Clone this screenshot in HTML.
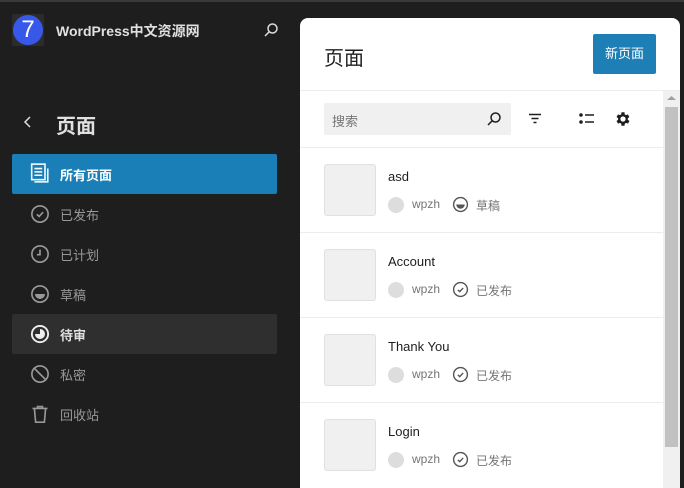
<!DOCTYPE html>
<html><head><meta charset="utf-8"><style>
*{margin:0;padding:0;box-sizing:border-box}
body{width:684px;height:482px;overflow:hidden;background:#1e1e1e;font-family:"Liberation Sans","Noto Sans CJK SC",sans-serif;position:relative}
.topline{position:absolute;left:0;top:0;width:684px;height:2px;background:#3a3a3a}
.logo{position:absolute;left:12px;top:14px;width:32px;height:32px;background:#2c2c2c;border-radius:2px}
.logo div{position:absolute;left:1px;top:1px;width:30px;height:30px;border-radius:50%;background:#3858e9;color:#fff;font-size:24px;text-align:center;line-height:30px}
.site{position:absolute;left:56px;top:21px;color:#e0e0e0;font-size:14px;font-weight:bold}
.abs{position:absolute}
.h{position:absolute;left:56px;top:110px;color:#e0e0e0;font-size:20px;font-weight:bold}
.item{position:absolute;left:12px;width:265px;height:40px;color:#999;font-size:13px;border-radius:2px}
.item span{position:absolute;left:48px;top:11px}
.item svg{position:absolute;left:18px;top:10px}
.panel{position:absolute;left:300px;top:18px;width:380px;height:470px;background:#fff;border-radius:8px 8px 0 0;overflow:hidden}
.ph{position:absolute;left:24px;top:24px;font-size:20px;color:#1e1e1e}
.btn{position:absolute;left:293px;top:16px;width:63px;height:40px;background:#1e7fb6;color:#fff;font-size:13px;text-align:center;line-height:40px;border-radius:2px}
.sep{position:absolute;left:0;width:363px;height:1px;background:#ececec}
.search{position:absolute;left:24px;top:85px;width:187px;height:32px;background:#f0f0f0;border-radius:2px;font-size:13px;color:#757575;padding:8px 8px}
.row{position:absolute;left:0;width:363px;height:85px}
.thumb{position:absolute;left:24px;top:17px;width:52px;height:52px;background:#f0f0f0;border:1px solid #e0e0e0;border-radius:3px}
.t{position:absolute;left:88px;top:22px;font-size:13px;color:#1e1e1e}
.m{position:absolute;left:88px;top:49px;font-size:12px;color:#757575;height:18px;width:200px}
.av{position:absolute;left:0;top:1px;width:16px;height:16px;border-radius:50%;background:#ddd}
.scroll{position:absolute;left:363px;top:73px;width:17px;height:400px;background:#f0f0f0}
.thumbbar{position:absolute;left:2px;top:16px;width:13px;height:340px;background:#c1c1c1}
</style></head><body>
<div class="topline"></div>
<div class="logo"><div>7</div></div>
<div class="site">WordPress中文资源网</div>
<svg class="abs" style="left:263px;top:22px" width="16" height="16" viewBox="0 0 16 16"><circle cx="9.5" cy="6.5" r="4.5" fill="none" stroke="#ddd" stroke-width="1.5"/><path d="M6.3 9.7L2 14" stroke="#ddd" stroke-width="1.5"/></svg>
<svg class="abs" style="left:22px;top:115px" width="12" height="14" viewBox="0 0 12 14"><path d="M8 2L3 7l5 5" fill="none" stroke="#ddd" stroke-width="1.5"/></svg>
<div class="h">页面</div>
<div class="item" style="top:154px;background:#1a7fb6;color:#fff"><svg width="20" height="20" viewBox="0 0 18 18" style="left:18px;top:9px"><rect x="1.5" y="1" width="12" height="14" fill="none" stroke="#fff" stroke-width="1.4"/><path d="M4 5h7M4 8h7M4 11h7M16 5v12H4" fill="none" stroke="#fff" stroke-width="1.4"/></svg><span style="font-weight:bold">所有页面</span></div>
<div class="item" style="top:194px"><svg width="20" height="20" viewBox="0 0 16 16"><circle cx="8" cy="8" r="6.5" fill="none" stroke="#999" stroke-width="1.3"/><path d="M5.5 8.3l1.8 1.7 3.2-3.5" fill="none" stroke="#999" stroke-width="1.3"/></svg><span>已发布</span></div>
<div class="item" style="top:234px"><svg width="20" height="20" viewBox="0 0 16 16"><circle cx="8" cy="8" r="6.5" fill="none" stroke="#999" stroke-width="1.3"/><path d="M8 4.5V8.5H5.5" fill="none" stroke="#999" stroke-width="1.3"/></svg><span>已计划</span></div>
<div class="item" style="top:274px"><svg width="20" height="20" viewBox="0 0 16 16"><circle cx="8" cy="8" r="6.5" fill="none" stroke="#999" stroke-width="1.3"/><path d="M4 8h8a4 4 0 0 1-8 0z" fill="#999"/></svg><span>草稿</span></div>
<div class="item" style="top:314px;background:#2f2f2f;color:#e0e0e0"><svg width="20" height="20" viewBox="0 0 16 16"><circle cx="8" cy="8" r="6.5" fill="none" stroke="#eee" stroke-width="1.5"/><path d="M8 4a4 4 0 1 1-4 4h4z" fill="#eee"/></svg><span style="font-weight:bold">待审</span></div>
<div class="item" style="top:354px"><svg width="20" height="20" viewBox="0 0 16 16"><circle cx="8" cy="8" r="6.5" fill="none" stroke="#999" stroke-width="1.3"/><path d="M3.5 3.5l9 9" stroke="#999" stroke-width="1.3"/></svg><span>私密</span></div>
<div class="item" style="top:394px"><svg width="20" height="20" viewBox="0 0 16 16"><path d="M2 3.5h12M6 3.5V2h4v1.5M3.5 3.5l1 11h7l1-11" fill="none" stroke="#999" stroke-width="1.3"/></svg><span>回收站</span></div>

<div class="panel">
<div class="ph">页面</div>
<div class="btn">新页面</div>
<div class="sep" style="top:72px;width:380px"></div>
<div class="search">搜索</div>
<svg class="abs" style="left:186px;top:93px" width="16" height="16" viewBox="0 0 16 16"><circle cx="9.5" cy="6.5" r="4.5" fill="none" stroke="#1e1e1e" stroke-width="1.5"/><path d="M6.3 9.7L2 14" stroke="#1e1e1e" stroke-width="1.5"/></svg>
<svg class="abs" style="left:228px;top:94px" width="14" height="14" viewBox="0 0 14 14"><path d="M1 2.5h12M3.5 6.5h7M5.5 10.5h3" stroke="#1e1e1e" stroke-width="1.4"/></svg>
<svg class="abs" style="left:278px;top:93px" width="18" height="16" viewBox="0 0 18 16"><circle cx="3" cy="4" r="1.8" fill="#1e1e1e"/><circle cx="3" cy="11" r="1.8" fill="#1e1e1e"/><path d="M7 4h9M7 11h9" stroke="#1e1e1e" stroke-width="1.5"/></svg>
<svg class="abs" style="left:314px;top:92px" width="18" height="18" viewBox="0 0 24 24"><path fill="#1e1e1e" d="M19.4 13a7.6 7.6 0 0 0 0-2l2.1-1.6-2-3.5-2.5 1a7.4 7.4 0 0 0-1.7-1L15 3h-4l-.4 2.9a7.4 7.4 0 0 0-1.7 1l-2.5-1-2 3.5L6.5 11a7.6 7.6 0 0 0 0 2l-2.1 1.6 2 3.5 2.5-1a7.4 7.4 0 0 0 1.7 1L11 21h4l.4-2.9a7.4 7.4 0 0 0 1.7-1l2.5 1 2-3.5zM13 15.5a3.5 3.5 0 1 1 0-7 3.5 3.5 0 0 1 0 7z" transform="translate(-1 0)"/></svg>
<div class="sep" style="top:129px"></div>

<div class="row" style="top:129px"><div class="thumb"></div><div class="t">asd</div><div class="m"><div class="av"></div><span class="abs" style="left:24px;top:1px">wpzh</span><svg class="abs" style="left:64px;top:0" width="17" height="17" viewBox="0 0 16 16"><circle cx="8" cy="8" r="6.5" fill="none" stroke="#555" stroke-width="1.3"/><path d="M4 8h8a4 4 0 0 1-8 0z" fill="#555"/></svg><span class="abs" style="left:88px;top:1px">草稿</span></div></div>
<div class="sep" style="top:214px"></div>
<div class="row" style="top:214px"><div class="thumb"></div><div class="t">Account</div><div class="m"><div class="av"></div><span class="abs" style="left:24px;top:1px">wpzh</span><svg class="abs" style="left:64px;top:0" width="17" height="17" viewBox="0 0 16 16"><circle cx="8" cy="8" r="6.5" fill="none" stroke="#555" stroke-width="1.3"/><path d="M5.5 8.3l1.8 1.7 3.2-3.5" fill="none" stroke="#555" stroke-width="1.3"/></svg><span class="abs" style="left:88px;top:1px">已发布</span></div></div>
<div class="sep" style="top:299px"></div>
<div class="row" style="top:299px"><div class="thumb"></div><div class="t">Thank You</div><div class="m"><div class="av"></div><span class="abs" style="left:24px;top:1px">wpzh</span><svg class="abs" style="left:64px;top:0" width="17" height="17" viewBox="0 0 16 16"><circle cx="8" cy="8" r="6.5" fill="none" stroke="#555" stroke-width="1.3"/><path d="M5.5 8.3l1.8 1.7 3.2-3.5" fill="none" stroke="#555" stroke-width="1.3"/></svg><span class="abs" style="left:88px;top:1px">已发布</span></div></div>
<div class="sep" style="top:384px"></div>
<div class="row" style="top:384px"><div class="thumb"></div><div class="t">Login</div><div class="m"><div class="av"></div><span class="abs" style="left:24px;top:1px">wpzh</span><svg class="abs" style="left:64px;top:0" width="17" height="17" viewBox="0 0 16 16"><circle cx="8" cy="8" r="6.5" fill="none" stroke="#555" stroke-width="1.3"/><path d="M5.5 8.3l1.8 1.7 3.2-3.5" fill="none" stroke="#555" stroke-width="1.3"/></svg><span class="abs" style="left:88px;top:1px">已发布</span></div></div>
<div class="scroll"><svg class="abs" style="left:4px;top:4px" width="9" height="6" viewBox="0 0 9 6"><path d="M0 5l4.5-4 4.5 4z" fill="#a0a0a0"/></svg><div class="thumbbar"></div></div>
</div>
</body></html>
